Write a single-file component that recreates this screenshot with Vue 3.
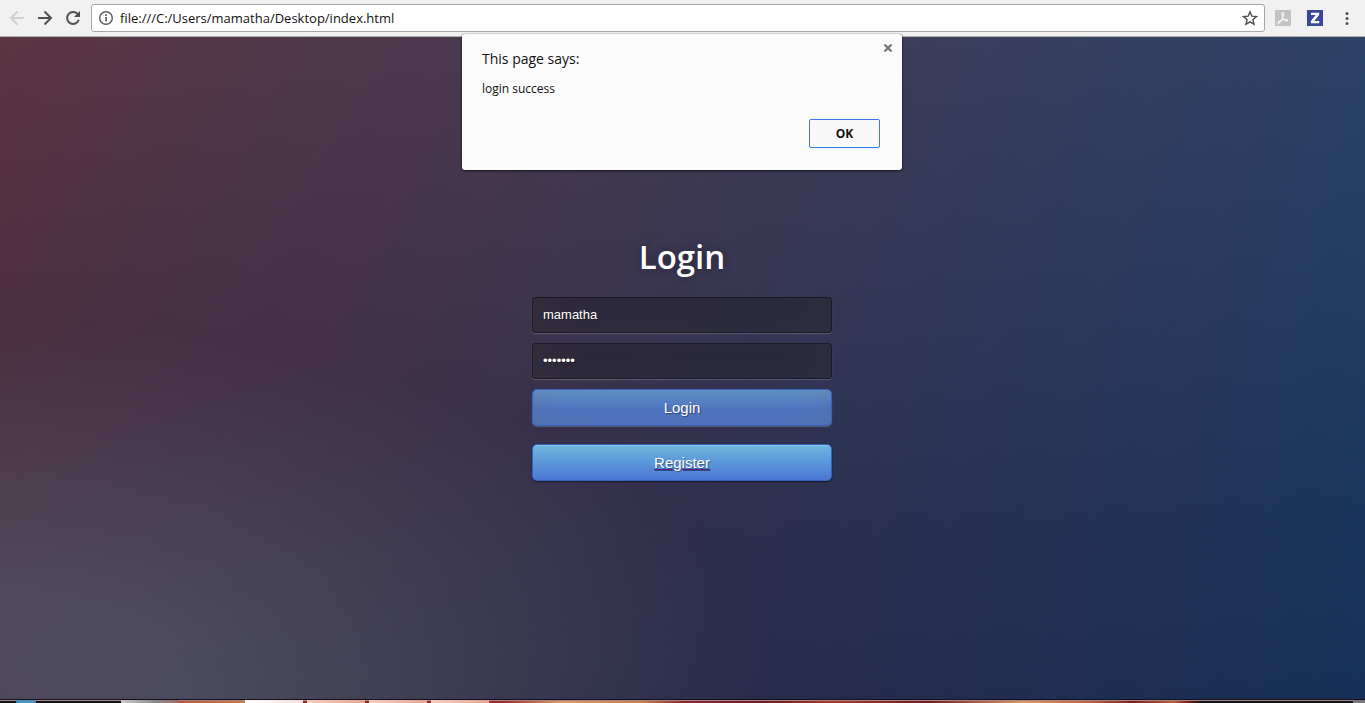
<script setup>
import { ref } from 'vue'

const username = ref('mamatha')
const password = ref('mamatha')
const address = ref('file:///C:/Users/mamatha/Desktop/index.html')
const tasks = ['grey', 'gap', 'white', 'rose', 'rose', 'rose']
</script>

<template>
  <div class="screen">
    <header class="toolbar">
      <button class="tool" type="button" aria-label="Back" disabled>
        <svg width="16" height="16" viewBox="0 0 16 16" fill="none" stroke="#cfcfcf" stroke-width="2"><path d="M15 8H2M8.500 1.500L2 8l6.500 6.500" /></svg>
      </button>
      <button class="tool" type="button" aria-label="Forward">
        <svg width="16" height="16" viewBox="0 0 16 16" fill="none" stroke="#505050" stroke-width="2"><path d="M1 8h13M7.500 1.500L14 8l-6.500 6.500" /></svg>
      </button>
      <button class="tool" type="button" aria-label="Reload">
        <svg width="16" height="16" viewBox="0 0 16 16"><path d="M13 4.500A6 6 0 1 0 13.800 9.800" fill="none" stroke="#505050" stroke-width="2" /><path d="M15 1v6H9z" fill="#505050" /></svg>
      </button>
      <div class="omnibox">
        <svg width="16" height="16" viewBox="0 0 16 16"><circle cx="8" cy="8" r="6.300" fill="none" stroke="#5a5a5a" stroke-width="1.400" /><path d="M7.200 7h1.700v4.500H7.200zM7.200 4.300h1.700v1.600H7.200z" fill="#5a5a5a" /></svg>
        <input v-model="address" class="address" type="text" aria-label="Address" spellcheck="false" />
        <button class="star" type="button" aria-label="Bookmark this page">
          <svg width="16" height="16" viewBox="0 0 16 16"><path d="M8 1.800l1.800 4.300 4.700.4-3.600 3.100 1.100 4.600L8 11.800l-4 2.400 1.100-4.600L1.500 6.500l4.700-.4z" fill="none" stroke="#505050" stroke-width="1.400" /></svg>
        </button>
      </div>
      <button class="tool extension" type="button" aria-label="PDF extension">
        <svg width="16" height="16" viewBox="0 0 16 16"><rect width="16" height="16" fill="#c3c3c3" /><path d="M7.500 2.500c1.500 0 1 2.500.3 4.500C7 9.500 5 12.800 3.400 13.200 2 13 4 10.800 7 10c2.500-.7 5.700-.6 5.800.5 0 1-2.800.3-4.300-1.700C7.200 7 6.400 2.700 7.500 2.500z" fill="none" stroke="#f4f4f4" stroke-width="1.100" /></svg>
      </button>
      <button class="tool extension" type="button" aria-label="Z extension">
        <svg width="16" height="16" viewBox="0 0 16 16"><rect width="16" height="16" fill="#3b479d" /><path d="M4 2.800h8.200v2L7.300 11h4.900v2.200H3.800v-2L8.700 5H4z" fill="#fff" /></svg>
      </button>
      <button class="tool extension" type="button" aria-label="Menu">
        <svg width="16" height="16" viewBox="0 0 16 16" fill="#505050"><circle cx="8" cy="3.500" r="1.500" /><circle cx="8" cy="8.500" r="1.500" /><circle cx="8" cy="13.500" r="1.500" /></svg>
      </button>
    </header>

    <main class="page">
      <form class="login" @submit.prevent>
        <h1>Login</h1>
        <input v-model="username" class="field" type="text" aria-label="Username" spellcheck="false" />
        <input v-model="password" class="field" type="password" aria-label="Password" />
        <button class="btn pressed" type="submit">Login</button>
        <a class="btn register" href="#register">Register</a>
      </form>
    </main>

    <section class="dialog" role="dialog" aria-labelledby="dialog-title">
      <h2 id="dialog-title">This page says:</h2>
      <p>login success</p>
      <button class="ok" type="button">OK</button>
      <button class="close" type="button" aria-label="Close">
        <svg width="10" height="10" viewBox="0 0 10 10" stroke="#777" stroke-width="2.200"><path d="M1.500 1.500l7 7M8.500 1.500l-7 7" /></svg>
      </button>
    </section>

    <footer class="taskbar">
      <span class="orb"></span>
      <span v-for="(task, i) in tasks" :key="i" class="task" :class="task"></span>
      <span class="desktop"></span>
    </footer>
  </div>
</template>

<style>
body {
  margin: 0;
}
</style>

<style scoped>
.screen {
  position: relative;
  display: flex;
  flex-direction: column;
  height: 100vh;
  overflow: hidden;
  font-family: "Open Sans", "Noto Sans", sans-serif;
}

button {
  cursor: pointer;
}

.toolbar {
  display: flex;
  align-items: center;
  box-sizing: border-box;
  height: 37px;
  padding: 0 2px 0 3px;
  background: #f1f1f1;
  border-bottom: 1px solid #b0b0b0;
}

.tool,
.star,
.close {
  display: flex;
  align-items: center;
  justify-content: center;
  padding: 0;
  border: 0;
  background: none;
}

.tool {
  flex: none;
  width: 28px;
  height: 28px;
}

.extension {
  width: 32px;
}

.omnibox {
  display: flex;
  flex: 1;
  align-items: center;
  gap: 6px;
  box-sizing: border-box;
  height: 28px;
  margin: 0 2px 0 4px;
  padding: 0 6px;
  background: #fff;
  border: 1px solid #a6a6a6;
  border-radius: 3px;
}

.address {
  flex: 1;
  min-width: 0;
  padding: 0;
  border: 0;
  outline: 0;
  background: none;
  color: #111;
  font: 13px/20px "Open Sans", "Noto Sans", sans-serif;
}

.page {
  display: flex;
  flex: 1;
  flex-direction: column;
  align-items: center;
  padding-right: 1px;
  background:
    radial-gradient(ellipse farthest-corner at 0% 100%, rgba(104, 128, 138, 0.4) 10%, rgba(138, 114, 76, 0) 40%),
    linear-gradient(to bottom, rgba(57, 173, 219, 0.25) 0%, rgba(42, 60, 87, 0.4) 100%),
    linear-gradient(135deg, #670d10 0%, #092756 100%);
}

.login {
  display: flex;
  flex-direction: column;
  gap: 10px;
  width: 300px;
  padding-top: 196px;
}

h1 {
  margin: 0 0 6px;
  color: #fff;
  font-size: 33px;
  font-weight: 600;
  line-height: 48px;
  text-align: center;
  text-shadow: 0 0 10px rgba(0, 0, 0, 0.3);
}

.field {
  box-sizing: border-box;
  width: 100%;
  height: 36px;
  padding: 0 10px 2px;
  color: #fff;
  background: rgba(0, 0, 0, 0.3);
  border: 1px solid rgba(0, 0, 0, 0.3);
  border-radius: 4px;
  outline: 0;
  font: 13px "Liberation Sans", Arial, sans-serif;
  text-shadow: 1px 1px 1px rgba(0, 0, 0, 0.3);
  box-shadow: inset 0 -5px 45px rgba(100, 100, 100, 0.2), 0 1px 1px rgba(255, 255, 255, 0.2);
}

.btn {
  box-sizing: border-box;
  height: 37px;
  color: #fff;
  background: #4a77d4 linear-gradient(to bottom, #6eb6de, #4a77d4) repeat-x;
  border: 1px solid #3762bc;
  border-radius: 5px;
  font: 15px/35px "Liberation Sans", Arial, sans-serif;
  text-align: center;
  text-shadow: 1px 1px 1px rgba(0, 0, 0, 0.4);
  box-shadow: inset 0 1px 0 rgba(255, 255, 255, 0.2), 0 1px 2px rgba(0, 0, 0, 0.5);
}

.pressed {
  padding: 0;
  background-position: 0 -15px;
  box-shadow: inset 0 -5px 45px rgba(100, 100, 100, 0.4), 0 1px 1px rgba(255, 255, 255, 0.2);
}

.register {
  margin-top: 8px;
  text-decoration: underline;
  text-decoration-color: #551a8b;
}

.dialog {
  position: absolute;
  top: 34px;
  right: 1px;
  left: 0;
  display: flex;
  flex-direction: column;
  box-sizing: border-box;
  width: 440px;
  margin: 0 auto;
  padding: 14px 22px 22px 20px;
  background: #fbfbfb;
  border-radius: 3px;
  box-shadow: 0 0 1px rgba(0, 0, 0, 0.6), 0 1px 3px rgba(0, 0, 0, 0.6);
}

.dialog h2 {
  margin: 0;
  color: #111;
  font-size: 14px;
  font-weight: 400;
  line-height: 22px;
}

.dialog p {
  margin: 10px 0 21px;
  color: #111;
  font-size: 12px;
  line-height: 18px;
}

.ok {
  align-self: flex-end;
  width: 71px;
  height: 29px;
  padding: 0;
  color: #111;
  background: #f9f9f9;
  border: 1px solid #3b78e7;
  border-radius: 2px;
  font: bold 12px "Open Sans", "Noto Sans", sans-serif;
}

.close {
  position: absolute;
  top: 9px;
  right: 9px;
}

.taskbar {
  display: flex;
  gap: 4px;
  box-sizing: border-box;
  height: 4px;
  border-top: 1px solid #15101c;
  background:
    linear-gradient(#a08a8a, #a08a8a) 0 0 / 100% 1px no-repeat,
    linear-gradient(to right, #121212 9%, #b04a3a 12%, #cf7f45 18%, #8f2a33 22%, #a02c35 37%, #d99a62 41%, #c98048 47%, #8c2733 50%, #6f1c26 56%, #a8382f 61%, #6f1c26 68%, #d99a62 75%, #c15a42 80%, #7a2024 83%, #c15a42 86%, #7a2024 87%, #111318 88%);
}

.orb {
  width: 20px;
  height: 3px;
  margin: 0 81px 0 16px;
  background: #4b92bd;
  border-radius: 10px 10px 0 0;
}

.task {
  width: 58px;
  height: 3px;
}

.grey {
  background: linear-gradient(to right, #c9c9c9, #8a8a8a 60%, #a06a66);
}

.white {
  background: linear-gradient(to right, #fff, #f3dedb);
}

.rose {
  background: linear-gradient(to right, #f0cfc0, #e0a596);
}

.desktop {
  width: 12px;
  height: 3px;
  margin-left: auto;
  background: #77797d;
}
</style>
